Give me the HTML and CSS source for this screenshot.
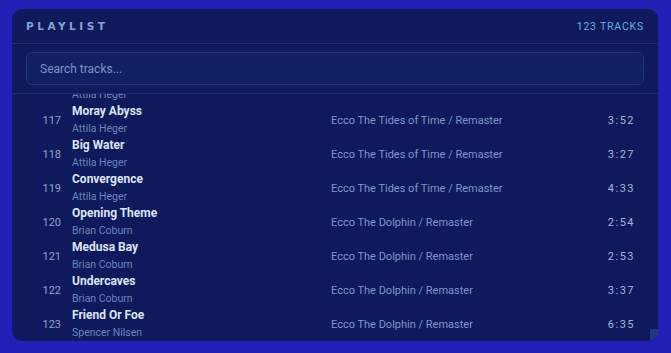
FILE: index.html
```html
<!DOCTYPE html>
<html lang="en">
<head>
  <meta charset="UTF-8">
  <title>Playlist</title>
  <link rel="stylesheet" href="styles.css">
</head>
<body>

  <div class="panel">
    <div class="panel-head">
      <span class="panel-title">PLAYLIST</span>
      <span class="panel-count">123 TRACKS</span>
    </div>

    <div class="search">
      <input class="search-input" type="text" placeholder="Search tracks...">
    </div>

    <div class="tracks">
      <div class="track">
        <span class="track-no">116</span>
        <div class="track-main">
          <span class="track-title">Sea of Darkness</span>
          <span class="track-artist">Attila Heger</span>
        </div>
        <span class="track-album">Ecco The Tides of Time / Remaster</span>
        <span class="track-time">3:41</span>
      </div>
      <div class="track">
        <span class="track-no">117</span>
        <div class="track-main">
          <span class="track-title">Moray Abyss</span>
          <span class="track-artist">Attila Heger</span>
        </div>
        <span class="track-album">Ecco The Tides of Time / Remaster</span>
        <span class="track-time">3:52</span>
      </div>
      <div class="track">
        <span class="track-no">118</span>
        <div class="track-main">
          <span class="track-title">Big Water</span>
          <span class="track-artist">Attila Heger</span>
        </div>
        <span class="track-album">Ecco The Tides of Time / Remaster</span>
        <span class="track-time">3:27</span>
      </div>
      <div class="track">
        <span class="track-no">119</span>
        <div class="track-main">
          <span class="track-title">Convergence</span>
          <span class="track-artist">Attila Heger</span>
        </div>
        <span class="track-album">Ecco The Tides of Time / Remaster</span>
        <span class="track-time">4:33</span>
      </div>
      <div class="track">
        <span class="track-no">120</span>
        <div class="track-main">
          <span class="track-title">Opening Theme</span>
          <span class="track-artist">Brian Coburn</span>
        </div>
        <span class="track-album">Ecco The Dolphin / Remaster</span>
        <span class="track-time">2:54</span>
      </div>
      <div class="track">
        <span class="track-no">121</span>
        <div class="track-main">
          <span class="track-title">Medusa Bay</span>
          <span class="track-artist">Brian Coburn</span>
        </div>
        <span class="track-album">Ecco The Dolphin / Remaster</span>
        <span class="track-time">2:53</span>
      </div>
      <div class="track">
        <span class="track-no">122</span>
        <div class="track-main">
          <span class="track-title">Undercaves</span>
          <span class="track-artist">Brian Coburn</span>
        </div>
        <span class="track-album">Ecco The Dolphin / Remaster</span>
        <span class="track-time">3:37</span>
      </div>
      <div class="track">
        <span class="track-no">123</span>
        <div class="track-main">
          <span class="track-title">Friend Or Foe</span>
          <span class="track-artist">Spencer Nilsen</span>
        </div>
        <span class="track-album">Ecco The Dolphin / Remaster</span>
        <span class="track-time">6:35</span>
      </div>
    </div>

    <!-- list is scrolled to the end -->
    <div class="scroll-thumb"></div>
  </div>

</body>
</html>
```

FILE: styles.css
```css
body {
  margin: 0;
  padding: 9px 13px 12px 12px;
  background-color: #2121b8;
  font-family: Roboto, "Liberation Sans", sans-serif;
}

.panel {
  position: relative;
  display: flex;
  flex-direction: column;
  height: 332px;
  background-color: #0e1a5b;
  border-radius: 10px;
  overflow: hidden;
}

.panel-head {
  display: flex;
  align-items: center;
  justify-content: space-between;
  height: 34px;
  padding: 0 14px;
  border-bottom: 1px solid #1c2d72;
}

.panel-title {
  font-family: "DejaVu Sans", sans-serif;
  font-size: 10.5px;
  font-weight: bold;
  letter-spacing: 3.5px;
  color: #86a3d2;
}

.panel-count {
  font-size: 10.5px;
  letter-spacing: 0.8px;
  color: #5fb0e4;
}

.search {
  padding: 8px 14px 8px 14px;
  border-bottom: 1px solid #1c2d72;
}

.search-input {
  display: block;
  box-sizing: border-box;
  width: 100%;
  height: 33px;
  padding: 0 13px;
  background-color: #112062;
  border: 1px solid #22367a;
  border-radius: 6px;
  font-family: inherit;
  font-size: 12px;
  color: #c8d6f0;
  outline: none;
}

.search-input::placeholder {
  color: #7c93c2;
}

.tracks {
  flex: 1;
  display: flex;
  flex-direction: column;
  justify-content: flex-end;
  overflow: hidden;
  padding: 0 23px 0 14px;
}

.track {
  flex-shrink: 0;
  display: grid;
  grid-template-columns: 35px 248px 1fr auto;
  column-gap: 11px;
  align-items: center;
  height: 34px;
}

.track-no {
  text-align: right;
  font-size: 11px;
  color: #8ea3c9;
}

.track-main {
  display: flex;
  flex-direction: column;
}

.track-title {
  font-size: 12px;
  font-weight: bold;
  line-height: 17px;
  color: #dbe5f7;
}

.track-artist {
  font-size: 10.5px;
  line-height: 17px;
  color: #6a84b9;
}

.track-album {
  font-size: 11px;
  color: #7e97c7;
}

.track-time {
  font-size: 11px;
  letter-spacing: 1.5px;
  color: #a3b6da;
}

.scroll-thumb {
  position: absolute;
  right: 0;
  bottom: 0;
  width: 8px;
  height: 12px;
  background-color: #1d3a86;
}
```
